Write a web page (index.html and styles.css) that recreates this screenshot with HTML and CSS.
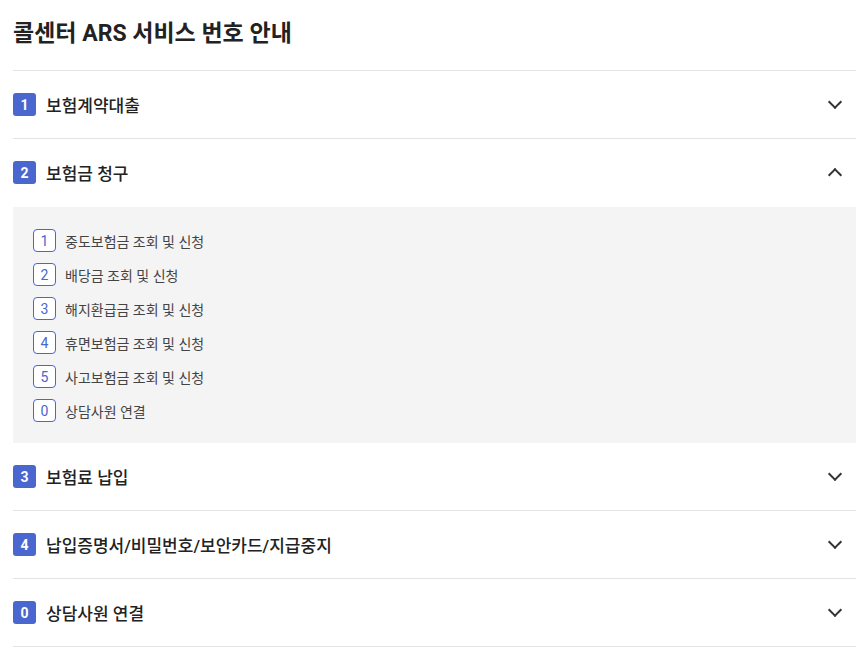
FILE: index.html
```html
<!DOCTYPE html>
<html lang="ko">
<head>
  <meta charset="UTF-8">
  <title>콜센터 ARS 서비스 번호 안내</title>
  <link rel="stylesheet" href="styles.css">
</head>
<body>

  <h2 class="title">콜센터 ARS 서비스 번호 안내</h2>

  <div class="acc">
    <div class="acc-item">
      <button class="acc-head" onclick="toggle(this)">
        <span class="num">1</span>
        <span class="label">보험계약대출</span>
        <span class="arrow"></span>
      </button>
    </div>

    <div class="acc-item open">
      <button class="acc-head" onclick="toggle(this)">
        <span class="num">2</span>
        <span class="label">보험금 청구</span>
        <span class="arrow"></span>
      </button>
      <ul class="acc-body">
        <li><span class="sub-num">1</span>중도보험금 조회 및 신청</li>
        <li><span class="sub-num">2</span>배당금 조회 및 신청</li>
        <li><span class="sub-num">3</span>해지환급금 조회 및 신청</li>
        <li><span class="sub-num">4</span>휴면보험금 조회 및 신청</li>
        <li><span class="sub-num">5</span>사고보험금 조회 및 신청</li>
        <li><span class="sub-num">0</span>상담사원 연결</li>
      </ul>
    </div>

    <div class="acc-item">
      <button class="acc-head" onclick="toggle(this)">
        <span class="num">3</span>
        <span class="label">보험료 납입</span>
        <span class="arrow"></span>
      </button>
    </div>

    <div class="acc-item">
      <button class="acc-head" onclick="toggle(this)">
        <span class="num">4</span>
        <span class="label">납입증명서/비밀번호/보안카드/지급중지</span>
        <span class="arrow"></span>
      </button>
    </div>

    <div class="acc-item">
      <button class="acc-head" onclick="toggle(this)">
        <span class="num">0</span>
        <span class="label">상담사원 연결</span>
        <span class="arrow"></span>
      </button>
    </div>
  </div>

  <script>
    function toggle(head) {
      const item = head.parentNode;
      if (!item.querySelector('.acc-body')) return;
      item.classList.toggle('open');
    }
  </script>

</body>
</html>
```

FILE: styles.css
```css
body { margin: 0; padding: 0 12px 0 13px; font-family: Roboto, "Noto Sans CJK KR", sans-serif; color: #222; background: #fff; }

.title { margin: 0; padding: 18px 0 21px; font-size: 23px; font-weight: 700; line-height: 31px; color: #222; }

.acc { border-top: 1px solid #e3e3e3; }

.acc-head { display: flex; align-items: center; width: 100%; height: 68px; padding: 0; border: none; border-bottom: 1px solid #e3e3e3; background: none; font: inherit; color: inherit; text-align: left; cursor: pointer; }
.acc-item.open .acc-head { border-bottom-color: transparent; }

.num { display: flex; align-items: center; justify-content: center; width: 23px; height: 23px; border-radius: 3px; background: #4a66cf; color: #fff; font-size: 14px; font-weight: 700; }
.label { flex: 1; margin-left: 10px; font-size: 17px; font-weight: 500; color: #222; }

.arrow { width: 8px; height: 8px; margin-right: 16px; border-right: 2px solid #333; border-bottom: 2px solid #333; transform: translateY(-3px) rotate(45deg); }
.acc-item.open .arrow { transform: translateY(2px) rotate(-135deg); }

.acc-body { display: none; margin: 0; padding: 22px 20px 21px; list-style: none; background: #f4f4f4; }
.acc-item.open .acc-body { display: flex; flex-direction: column; gap: 11px; }
.acc-body li { display: flex; align-items: center; font-size: 14px; color: #444; }

.sub-num { display: flex; align-items: center; justify-content: center; box-sizing: border-box; width: 23px; height: 23px; margin-right: 9px; border: 1px solid #4a66cf; border-radius: 4px; background: #fff; color: #4a66cf; font-size: 14px; }
```
